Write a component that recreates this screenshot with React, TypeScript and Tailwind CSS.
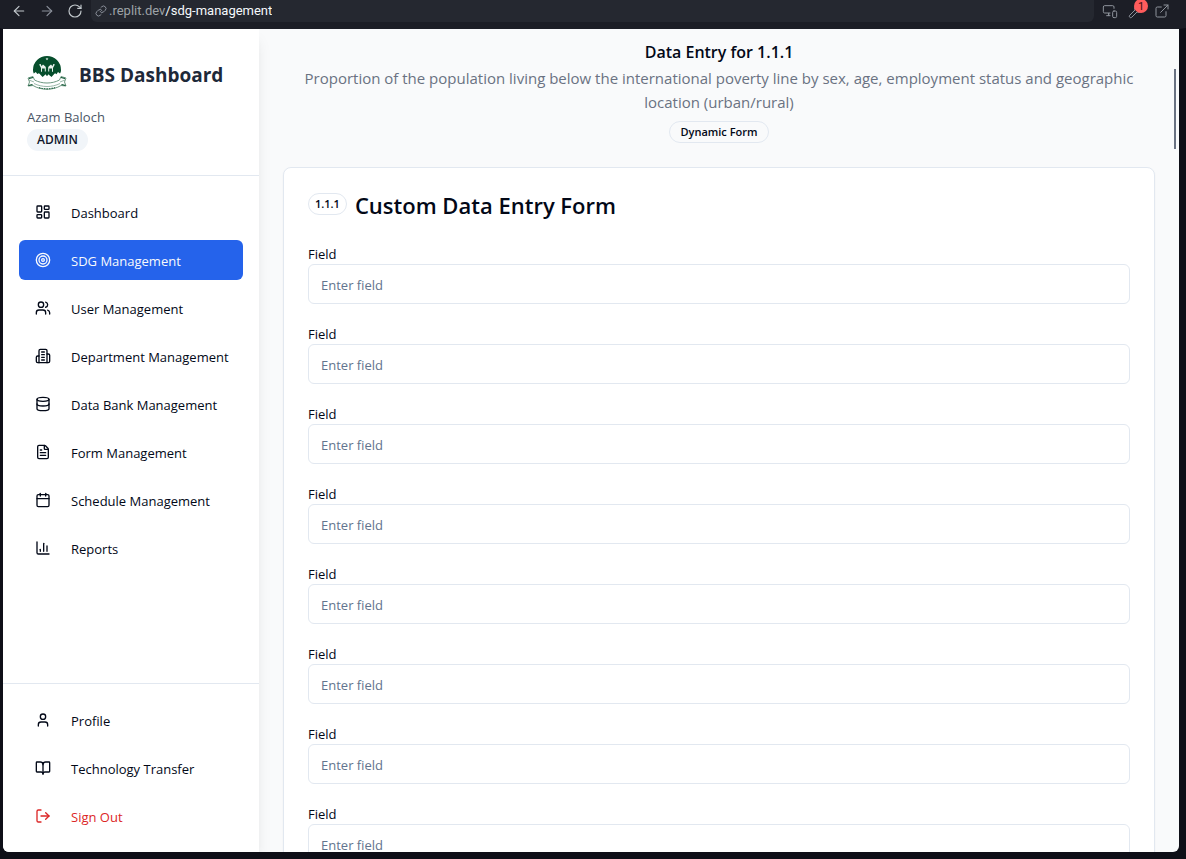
import type { ReactNode } from "react";
import {
  ArrowLeft,
  ArrowRight,
  BookOpen,
  Calendar,
  ChartColumn,
  Database,
  ExternalLink,
  FileText,
  LayoutDashboard,
  Link,
  LogOut,
  MonitorSmartphone,
  RotateCw,
  Target,
  User,
  Users,
  Wrench,
} from "lucide-react";

function Crest() {
  return (
    <svg viewBox="0 0 40 40" className="size-10 shrink-0" role="img" aria-label="BBS crest">
      <path
        d="M6 17a14 14 0 1 1 28 0c0 1.600-.4 2.600-1 3.600l-2-1.600-1.500 2.200-1.800-1.200-2 1.600-2.200 1.400-1.800-2-1.700 2.300-1.700-2.300-2 2.300-2.200-1.800-1.800-1.400-2 1-1.500-2-2 1.500C6.400 19.600 6 18.600 6 17z"
        fill="#064e2c"
      />
      <path d="M17.200 5.800a3 3 0 0 0 5.600.4 3 3 0 0 1-5.600-.4z" fill="#dce9e2" />
      <path d="M20 4.600l.5 1h1l-.8.6.3 1-1-.6-1 .6.300-1-.8-.6h1z" fill="#dce9e2" />
      <path
        d="M12 11.500l1.800-.5.7 2.300 1.500-1.800 1.500 1.300 1.300 1.200v4.500h-1v-3h-2.800v3.200h-1v-3.700l-1.300-2.500zM28 11.500l-1.800-.5-.7 2.300-1.500-1.800-1.500 1.300-1.300 1.200v4.500h1v-3H25v3.200h1v-3.700l1.300-2.500z"
        fill="#e8f1ec"
      />
      <path d="M11 19l4.500 5 4.500-4 4.500 4 4.500-5z" fill="#064e2c" />
      <path
        d="M1 25l5-1.500 1.500 3.500C15 31 25 31 32.500 27l1.500-3.500 5 1.500-1.500 4L39 33l-5-.5C26 37.500 14 37.500 6 32.500L1 33l1.500-4z"
        fill="#fff"
        stroke="#5c8c73"
        strokeWidth=".9"
      />
      <path d="M7 30.500c8 4 18 4 26 0M2 27l5 2M38 27l-5 2" fill="none" stroke="#6d9882" strokeWidth=".7" />
      <path d="M12 34.600c5 1.600 11 1.600 16 0" fill="none" stroke="#2d6b4c" strokeWidth="1.200" strokeDasharray="1.500 1" />
      <path d="M2 25.500l4-1M38 25.500l-4-1M1.500 32.500l4-1M38.500 32.500l-4-1" stroke="#064e2c" strokeWidth="1.200" />
    </svg>
  );
}

function OfficeBuilding() {
  return (
    <svg
      viewBox="0 0 24 24"
      className="size-4 shrink-0"
      fill="none"
      stroke="currentColor"
      strokeWidth="2"
      strokeLinecap="round"
      strokeLinejoin="round"
      aria-hidden="true"
    >
      <path d="M6 22V4a2 2 0 0 1 2-2h8a2 2 0 0 1 2 2v18Z" />
      <path d="M6 12H4a2 2 0 0 0-2 2v6a2 2 0 0 0 2 2h2" />
      <path d="M18 9h2a2 2 0 0 1 2 2v9a2 2 0 0 1-2 2h-2" />
      <path d="M10 6h4M10 10h4M10 14h4M10 18h4" />
    </svg>
  );
}

type Item = { label: string; icon: ReactNode; tone?: "active" | "danger" };

const mainItems: Item[] = [
  { label: "Dashboard", icon: <LayoutDashboard className="size-4 shrink-0" /> },
  { label: "SDG Management", icon: <Target className="size-4 shrink-0" />, tone: "active" },
  { label: "User Management", icon: <Users className="size-4 shrink-0" /> },
  { label: "Department Management", icon: <OfficeBuilding /> },
  { label: "Data Bank Management", icon: <Database className="size-4 shrink-0" /> },
  { label: "Form Management", icon: <FileText className="size-4 shrink-0" /> },
  { label: "Schedule Management", icon: <Calendar className="size-4 shrink-0" /> },
  { label: "Reports", icon: <ChartColumn className="size-4 shrink-0" /> },
];

const accountItems: Item[] = [
  { label: "Profile", icon: <User className="size-4 shrink-0" /> },
  { label: "Technology Transfer", icon: <BookOpen className="size-4 shrink-0" /> },
  { label: "Sign Out", icon: <LogOut className="size-4 shrink-0" />, tone: "danger" },
];

function NavButton({ item }: { item: Item }) {
  const tone =
    item.tone === "active"
      ? "bg-[#2563eb] text-slate-50"
      : item.tone === "danger"
        ? "text-[#dc2626]"
        : "text-[#020817]";
  return (
    <button
      type="button"
      className={`flex h-10 w-full items-center gap-5 rounded-md pl-4 text-[13px] leading-5 whitespace-nowrap ${tone}`}
    >
      {item.icon}
      <span className="pt-0.5">{item.label}</span>
    </button>
  );
}

function BrowserBar() {
  return (
    <header className="flex h-7 shrink-0 items-start text-[#c2c8cc]">
      <div className="flex h-[22px] items-center gap-3 pl-[11px]">
        <button type="button" aria-label="Back">
          <ArrowLeft className="size-4" strokeWidth={1.75} />
        </button>
        <button type="button" aria-label="Forward" className="text-[#8a8f99]">
          <ArrowRight className="size-4" strokeWidth={1.75} />
        </button>
        <button type="button" aria-label="Reload">
          <RotateCw className="size-4" strokeWidth={1.75} />
        </button>
      </div>
      <div className="ml-2 flex h-[22px] min-w-0 grow items-center gap-0.5 rounded-b-md bg-[#252830] px-1 font-[Roboto,sans-serif] text-[13px]">
        <Link className="size-3 shrink-0 text-[#8a8f99]" />
        <span className="truncate text-[#9da2a6]">
          .replit.dev<span className="text-[#f5f9fc]">/sdg-management</span>
        </span>
      </div>
      <div className="flex h-[22px] items-center gap-2.5 pr-4 pl-2 text-[#8f949c]">
        <button type="button" aria-label="Devices">
          <MonitorSmartphone className="size-4" strokeWidth={1.5} />
        </button>
        <button type="button" aria-label="Developer tools" className="relative">
          <Wrench className="size-4" strokeWidth={1.5} />
          <span className="absolute -top-1 -right-1 flex size-3.5 items-center justify-center rounded-full bg-[#ff5c5c] font-[Roboto,sans-serif] text-[11px] leading-none text-[#3a0d0d]">
            1
          </span>
        </button>
        <button type="button" aria-label="Open in new tab">
          <ExternalLink className="size-4" strokeWidth={1.5} />
        </button>
      </div>
    </header>
  );
}

function Sidebar() {
  return (
    <aside className="z-10 flex w-64 shrink-0 flex-col bg-white shadow-lg">
      <div className="border-b border-slate-200 p-6">
        <div className="flex items-center gap-3">
          <Crest />
          <h1 className="pt-1 text-[19px] leading-7 font-bold whitespace-nowrap text-gray-800">BBS Dashboard</h1>
        </div>
        <p className="mt-3.5 text-[13px] leading-5 text-gray-600">Azam Baloch</p>
        <span className="mt-0.5 flex h-[22px] w-fit items-center rounded-full bg-slate-100 px-2.5 text-xs font-semibold text-slate-900">
          ADMIN
        </span>
      </div>
      <nav className="flex grow flex-col gap-2 p-4" aria-label="Main">
        {mainItems.map((item) => (
          <NavButton key={item.label} item={item} />
        ))}
      </nav>
      <nav className="flex flex-col gap-2 border-t border-slate-200 p-4" aria-label="Account">
        {accountItems.map((item) => (
          <NavButton key={item.label} item={item} />
        ))}
      </nav>
    </aside>
  );
}

const fieldIds = Array.from({ length: 8 }, (_, i) => `field-${i + 1}`);

function EntryForm() {
  return (
    <form className="rounded-lg border border-slate-200 bg-white p-6 shadow-xs">
      <div className="mb-7 flex h-6 items-center gap-2">
        <span className="flex h-[22px] items-center rounded-full border border-slate-200 px-1.5 text-[11px] font-semibold">
          1.1.1
        </span>
        <h3 className="pt-0.5 text-[22px] leading-7 font-semibold">Custom Data Entry Form</h3>
      </div>
      {fieldIds.map((id) => (
        <div key={id} className="mb-5">
          <label htmlFor={id} className="block text-[13px] leading-5">
            Field
          </label>
          <input
            id={id}
            type="text"
            placeholder="Enter field"
            className="block h-10 w-full rounded-md border border-slate-200 bg-white px-3 pt-0.5 text-[13px] placeholder:text-slate-500"
          />
        </div>
      ))}
    </form>
  );
}

export default function App() {
  return (
    <div className="flex h-screen flex-col bg-[#1c1e26] font-['Open_Sans','Noto_Sans',sans-serif] text-[#020817]">
      <BrowserBar />
      <div className="flex min-h-0 grow border-t border-r-[7px] border-b-[7px] border-l-[3px] border-t-[#1c1e26] border-r-[#0e0f17] border-b-[#0e0f17] border-l-[#0e0f17] bg-[#0e0f17]">
        <div className="relative flex min-w-0 grow overflow-hidden rounded-b-md bg-[#f9fafb]">
          <Sidebar />
          <main className="min-w-0 grow overflow-y-auto px-6 pt-[9px] [scrollbar-width:none]">
            <div className="mb-6 flex flex-col items-center text-center">
              <h2 className="text-base leading-7 font-semibold">Data Entry for 1.1.1</h2>
              <p className="text-[15px] leading-6 text-gray-500">
                Proportion of the population living below the international poverty line by sex, age, employment
                status and geographic location (urban/rural)
              </p>
              <span className="mt-[7px] flex h-[22px] items-center rounded-full border border-slate-200 px-2.5 text-[11px] font-semibold">
                Dynamic Form
              </span>
            </div>
            <EntryForm />
          </main>
          <div className="absolute top-10 right-[3px] h-20 w-0.5 bg-gray-500" />
        </div>
      </div>
    </div>
  );
}
